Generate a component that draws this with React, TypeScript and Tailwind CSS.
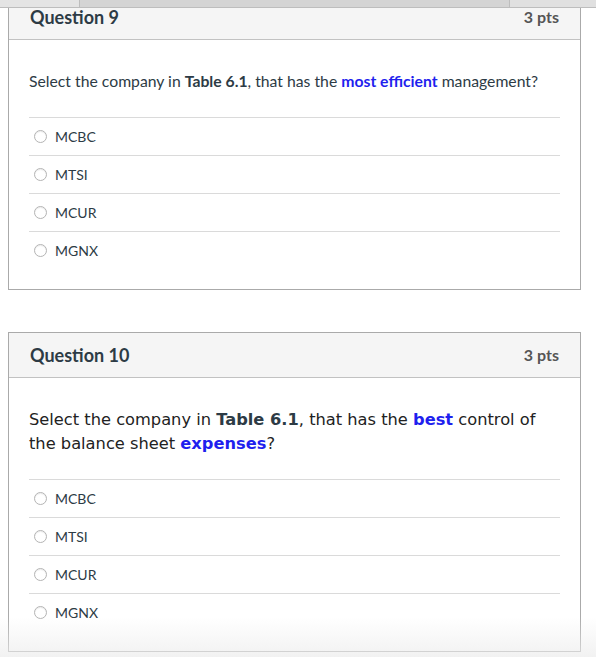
import React from 'react';

const lato = { fontFamily: 'Lato, "Noto Sans", sans-serif' };

function Radio() {
  return (
    <span className="inline-block w-[13px] h-[13px] rounded-full border border-[#b4b4b4] bg-white shadow-[inset_0_1px_1px_rgba(0,0,0,0.08)] shrink-0" />
  );
}

function Answers({ items }: { items: string[] }) {
  return (
    <div>
      {items.map((a) => (
        <div key={a} className="flex items-center gap-[8px] border-t border-[#dadada] h-[38px] pl-[5px]">
          <Radio />
          <span className="text-[14px] text-[#2d3b45]">{a}</span>
        </div>
      ))}
    </div>
  );
}

function Card({ title, children, className = '' }: { title: string; children: React.ReactNode; className?: string }) {
  return (
    <div className={`w-[573px] border border-[#aaaaaa] bg-white ${className}`} style={lato}>
      <div className="h-[45px] bg-[#f5f5f5] border-b border-[#c2c2c2] flex items-center justify-between px-[21px]">
        <h2 className="text-[18px] font-bold text-[#2d3b45]">{title}</h2>
        <span className="text-[16px] font-bold text-[#555]">3 pts</span>
      </div>
      <div className="px-[20px] pt-[30px] pb-[20px]">{children}</div>
    </div>
  );
}

const opts = ['MCBC', 'MTSI', 'MCUR', 'MGNX'];

export default function App() {
  return (
    <div className="relative h-[657px] overflow-hidden bg-white">
      {/* fixed bar at top, page scrolled under it */}
      <div className="absolute top-0 left-0 right-0 h-[8px] flex border-b border-[#bdbdbd] z-10">
        <div className="w-[80px] bg-[#e4e4e4] border-r border-[#bdbdbd]" />
        <div className="flex-1 bg-[#d4d4d4] border-r border-[#bdbdbd]" />
        <div className="w-[86px] bg-[#e0e0e0]" />
      </div>

      <div className="pl-[8px] -mt-[6px]">
        <Card title="Question 9">
          <p className="text-[15.75px] leading-[22px] text-[#2d3b45] mb-[25px]">
            Select the company in <b>Table 6.1</b>, that has the{' '}
            <b className="text-[#1f1fee]">most efficient</b> management?
          </p>
          <Answers items={opts} />
        </Card>

        <Card title="Question 10" className="mt-[42px]">
          <p
            className="text-[16.25px] leading-[24px] text-[#222] mb-[23px]"
            style={{ fontFamily: '"DejaVu Sans", Verdana, sans-serif' }}
          >
            Select the company in <b className="text-[#2d3b45]">Table 6.1</b>, that has the{' '}
            <b className="text-[#1f1fee]">best</b> control of the balance sheet{' '}
            <b className="text-[#1f1fee]">expenses</b>?
          </p>
          <Answers items={opts} />
        </Card>
      </div>

      <div className="pointer-events-none absolute bottom-0 left-0 right-0 h-[40px] bg-gradient-to-b from-transparent to-[#ececec]/70" />
    </div>
  );
}
